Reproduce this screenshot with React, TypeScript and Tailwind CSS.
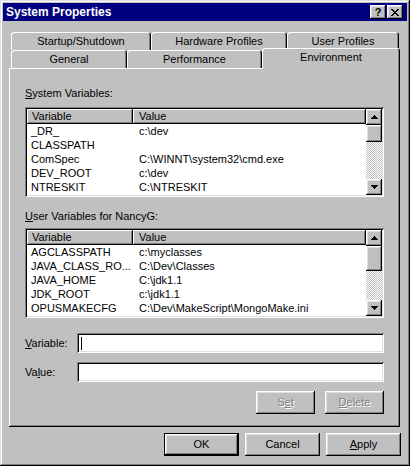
import React from "react";

const raised =
  "shadow-[inset_-1px_-1px_#000,inset_1px_1px_#fff,inset_-2px_-2px_#808080,inset_2px_2px_#dfdfdf]";
const sunken =
  "shadow-[inset_1px_1px_#808080,inset_-1px_-1px_#fff,inset_2px_2px_#000,inset_-2px_-2px_#dfdfdf]";
const headerCell =
  "shadow-[inset_-1px_-1px_#000,inset_1px_1px_#fff,inset_-2px_-2px_#808080]";
const tabEdge =
  "shadow-[inset_1px_1px_#fff,inset_-1px_0_#000,inset_-2px_0_#808080]";

const systemVars: [string, string][] = [
  ["_DR_", "c:\\dev"],
  ["CLASSPATH", ""],
  ["ComSpec", "C:\\WINNT\\system32\\cmd.exe"],
  ["DEV_ROOT", "c:\\dev"],
  ["NTRESKIT", "C:\\NTRESKIT"],
];

const userVars: [string, string][] = [
  ["AGCLASSPATH", "c:\\myclasses"],
  ["JAVA_CLASS_RO...", "C:\\Dev\\Classes"],
  ["JAVA_HOME", "C:\\jdk1.1"],
  ["JDK_ROOT", "c:\\jdk1.1"],
  ["OPUSMAKECFG", "C:\\Dev\\MakeScript\\MongoMake.ini"],
];

const Arrow = ({ down }: { down?: boolean }) => (
  <svg width="7" height="4" shapeRendering="crispEdges" className={down ? "rotate-180" : ""}>
    <rect x="3" y="0" width="1" height="1" />
    <rect x="2" y="1" width="3" height="1" />
    <rect x="1" y="2" width="5" height="1" />
    <rect x="0" y="3" width="7" height="1" />
  </svg>
);

const ScrollBar = ({ thumb }: { thumb: string }) => (
  <div className="w-[16px] flex flex-col shrink-0">
    <div className={`h-[16px] flex items-center justify-center bg-[#c0c0c0] ${raised}`}>
      <Arrow />
    </div>
    <div className={`${thumb} bg-[#c0c0c0] ${raised}`} />
    <div className="flex-1 [background:repeating-conic-gradient(#fff_0_25%,#c0c0c0_0_50%)_0_0/2px_2px]" />
    <div className={`h-[16px] flex items-center justify-center bg-[#c0c0c0] ${raised}`}>
      <Arrow down />
    </div>
  </div>
);

const ListBox = ({ rows, thumb }: { rows: [string, string][]; thumb: string }) => (
  <div className={`w-[359px] h-[90px] bg-white p-[2px] flex ${sunken}`}>
    <div className="flex-1 overflow-hidden">
      <div className="flex h-[15px] leading-[14px] bg-[#c0c0c0]">
        <div className={`w-[106px] pl-[5px] ${headerCell}`}>Variable</div>
        <div className={`flex-1 pl-[6px] ${headerCell}`}>Value</div>
      </div>
      {rows.map(([name, value]) => (
        <div key={name} className="flex h-[14px] leading-[14px]">
          <div className="w-[106px] pl-[4px] whitespace-nowrap overflow-hidden">{name}</div>
          <div className="pl-[6px] whitespace-nowrap">{value}</div>
        </div>
      ))}
    </div>
    <ScrollBar thumb={thumb} />
  </div>
);

const Tab = ({ label, w, selected }: { label: string; w: string; selected?: boolean }) => (
  <div
    className={`${w} ${
      selected ? "h-[21px] mb-[-1px] relative z-10" : "h-[18px]"
    } pt-[2px] leading-[14px] text-center bg-[#c0c0c0] rounded-t-[3px] ${tabEdge}`}
  >
    {label}
  </div>
);

const Button = ({
  children,
  w,
  disabled,
  isDefault,
}: {
  children: React.ReactNode;
  w: string;
  disabled?: boolean;
  isDefault?: boolean;
}) => (
  <div
    className={`${w} h-[23px] flex items-center justify-center bg-[#c0c0c0] ${
      isDefault
        ? "shadow-[inset_0_0_0_1px_#000,inset_-2px_-2px_#000,inset_2px_2px_#fff,inset_-3px_-3px_#808080,inset_3px_3px_#dfdfdf]"
        : raised
    } ${disabled ? "text-[#808080] [text-shadow:1px_1px_0_#fff]" : "text-black"}`}
  >
    {children}
  </div>
);

export default function App() {
  return (
    <div className="w-[410px] h-[466px] bg-[#c0c0c0] p-[3px] font-['Liberation_Sans',Arial,sans-serif] text-[11px] text-black shadow-[inset_-1px_-1px_#000,inset_1px_1px_#dfdfdf,inset_-2px_-2px_#808080,inset_2px_2px_#fff]">
      {/* title bar */}
      <div className="h-[18px] bg-[#000080] flex items-center justify-between pl-[3px] pr-[4px]">
        <span className="text-white font-bold text-[12px] leading-[14px]">System Properties</span>
        <div className="flex gap-[1px]">
          <div
            className={`w-[16px] h-[14px] flex items-center justify-center bg-[#c0c0c0] text-black font-bold text-[11px] leading-[12px] ${raised}`}
          >
            ?
          </div>
          <div className={`w-[16px] h-[14px] flex items-center justify-center bg-[#c0c0c0] ${raised}`}>
            <svg width="8" height="7" shapeRendering="crispEdges">
              {[0, 1, 2, 3, 4, 5, 6].map((i) => (
                <g key={i}>
                  <rect x={i} y={i} width="2" height="1" />
                  <rect x={6 - i} y={i} width="2" height="1" />
                </g>
              ))}
            </svg>
          </div>
        </div>
      </div>

      <div className="ml-[6px] mt-[11px]">
        {/* back row of tabs */}
        <div className="flex items-end h-[18px] pl-[2px]">
          <Tab label="Startup/Shutdown" w="w-[140px]" />
          <Tab label="Hardware Profiles" w="w-[136px]" />
          <Tab label="User Profiles" w="w-[112px]" />
        </div>
        {/* front row of tabs */}
        <div className="flex items-end h-[18px] pl-[2px]">
          <Tab label="General" w="w-[116px]" />
          <Tab label="Performance" w="w-[135px]" />
          <Tab label="Environment" w="w-[138px]" selected />
        </div>

        {/* panel */}
        <div className="w-[391px] h-[359px] px-[16px] pt-[18px] shadow-[inset_-1px_-1px_#000,inset_1px_1px_#fff,inset_-2px_-2px_#808080]">
          <div className="leading-[14px]">
            <span className="underline">S</span>ystem Variables:
          </div>
          <div className="mt-[7px]">
            <ListBox rows={systemVars} thumb="h-[17px]" />
          </div>

          <div className="leading-[14px] mt-[12px]">
            <span className="underline">U</span>ser Variables for NancyG:
          </div>
          <div className="mt-[5px]">
            <ListBox rows={userVars} thumb="h-[25px]" />
          </div>

          <div className="flex items-center mt-[15px]">
            <div className="w-[52px]">
              <span className="underline">V</span>ariable:
            </div>
            <div className={`w-[307px] h-[20px] bg-white flex items-center pl-[4px] ${sunken}`}>
              <div className="w-[1px] h-[13px] bg-black" />
            </div>
          </div>
          <div className="flex items-center mt-[9px]">
            <div className="w-[52px]">
              Va<span className="underline">l</span>ue:
            </div>
            <div className={`w-[307px] h-[20px] bg-white ${sunken}`} />
          </div>

          <div className="flex justify-end gap-[10px] mt-[9px]">
            <Button w="w-[59px]" disabled>
              <span>
                S<span className="underline">e</span>t
              </span>
            </Button>
            <Button w="w-[59px]" disabled>
              <span>
                <span className="underline">D</span>elete
              </span>
            </Button>
          </div>
        </div>
      </div>

      {/* dialog buttons */}
      <div className="flex justify-end gap-[6px] pr-[6px] mt-[6px]">
        <Button w="w-[75px]" isDefault>
          OK
        </Button>
        <Button w="w-[75px]">Cancel</Button>
        <Button w="w-[75px]">
          <span>
            <span className="underline">A</span>pply
          </span>
        </Button>
      </div>
    </div>
  );
}
